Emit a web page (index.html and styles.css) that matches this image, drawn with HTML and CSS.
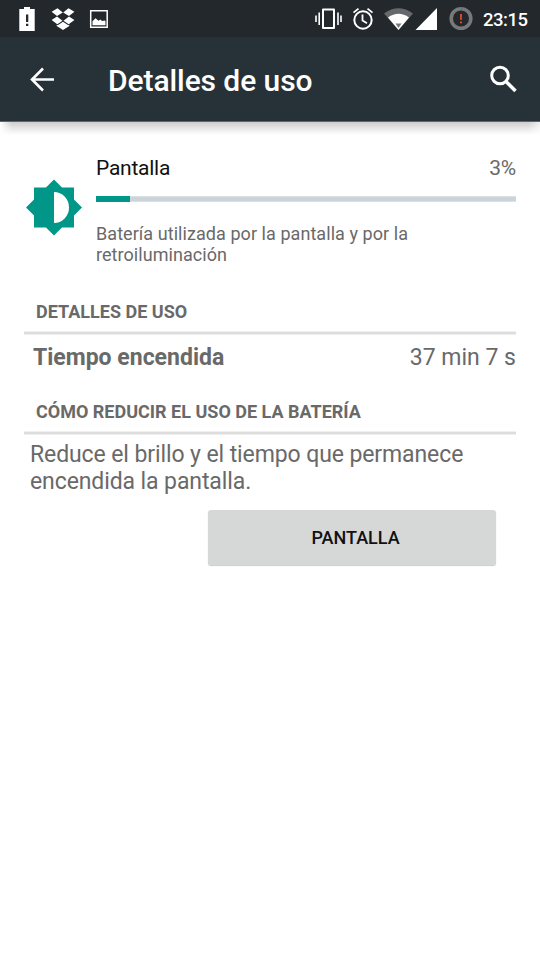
FILE: index.html
```
<!DOCTYPE html>
<html lang="es">
<head>
<meta charset="utf-8">
<title>Detalles de uso</title>
<link rel="stylesheet" href="styles.css">
</head>
<body>
<div class="status">
  <svg class="status-icons" width="120" height="37" viewBox="0 0 120 37">
    <path fill="#fff" d="M24 7h6v2h4.700v22H19.300V9H24z"/>
    <path fill="#22282c" d="M26 14.500h2.300v7.500H26zM26 23.700h2.300v2.300H26z"/>
    <path fill="#fff" d="M57.500 8.300l5.300 4.200-5.800 3.500-5.400-4.300zM68.500 8.300l-5.300 4.200 5.800 3.500 5.400-4.300zM57 16.500l5.500 4.200-5.200 3.500-5.700-4.200zM69 16.500l-5.500 4.200 5.200 3.500 5.700-4.200zM63 21.800l5.300 3.500 1-.6v1.300L63 30l-6.300-4v-1.300l1 .6z"/>
    <path fill="none" stroke="#fff" stroke-width="1.500" d="M90.700 10.700h16.500v16.500H90.700z"/>
    <path fill="#fff" d="M92.500 25.300v-4l3-3 3 2.500 2-1.300 1.500 1.500 3-.5.500 1v3.800z"/>
  </svg>
  <svg class="status-icons" width="170" height="37" viewBox="310 0 170 37">
    <path fill="none" stroke="#fff" stroke-width="2" stroke-linejoin="round" d="M323 9.500h11v18.500h-11z"/>
    <path stroke="#fff" stroke-width="1.600" d="M319.200 12.500v12.500M316 15.500v6.500M338 12.500v12.500M341 15.500v6.500"/>
    <circle cx="363" cy="20" r="8.700" fill="none" stroke="#fff" stroke-width="2"/>
    <path fill="none" stroke="#fff" stroke-width="1.800" d="M362.500 14.500V20.500l4.500 2.700M353.500 12.600l5-4M372.500 12.600l-5-4"/>
    <path fill="#66696c" d="M384 13.500Q398.500 3 413 13.500L398.500 30z"/>
    <path fill="#fff" d="M388 17.500Q398.500 10 409 17.500L398.500 30z"/>
    <path fill="#77797b" d="M395.500 23.500h6L398.500 28z"/>
    <path fill="#fff" d="M437 8v22h-21.500z"/>
    <circle cx="461" cy="18.500" r="9.800" fill="none" stroke="#77797a" stroke-width="3.600"/>
    <path stroke="#b0533d" stroke-width="1" d="M461.500 7v3.500"/>
    <path fill="#e8491f" d="M460 14h2l-.2 6h-1.600zM460 21.500h2v1.700h-2z"/>
  </svg>
  <span class="clock">23:15</span>
</div>
<header class="appbar">
  <svg width="28" height="28" viewBox="28 65 28 28"><path fill="none" stroke="#fff" stroke-width="2.600" d="M54 79.500H32M43 68.500l-11 11 11 11"/></svg>
  <h1>Detalles de uso</h1>
  <svg width="30" height="30" viewBox="489 64 30 30"><circle cx="500" cy="75.500" r="8.300" fill="none" stroke="#fff" stroke-width="3"/><path stroke="#fff" stroke-width="3.600" d="M506.500 82l9 9"/></svg>
</header>
<div class="shade"></div>
<main>
  <section class="summary">
    <svg class="brightness" width="58" height="58" viewBox="25 178 58 58">
      <path fill="#009688" d="M54 179.500l8 8h12v12l8 8-8 8v12H62l-8 8-8-8H34v-12l-8-8 8-8v-12h12z"/>
      <path fill="#fff" d="M54 192a15 15.500 0 0 1 0 31z"/>
    </svg>
    <div class="info">
      <div class="row name"><span>Pantalla</span><span class="percent">3%</span></div>
      <div class="bar"><div class="fill"></div></div>
      <p class="desc">Batería utilizada por la pantalla y por la<br>retroiluminación</p>
    </div>
  </section>
  <h2>DETALLES DE USO</h2>
  <div class="row detail"><b>Tiempo encendida</b><span>37 min 7 s</span></div>
  <h2>CÓMO REDUCIR EL USO DE LA BATERÍA</h2>
  <p class="tip">Reduce el brillo y el tiempo que permanece<br>encendida la pantalla.</p>
  <button>PANTALLA</button>
</main>
</body>
</html>
```

FILE: styles.css
```
* { box-sizing: border-box; margin: 0; }
body { width: 540px; height: 960px; background: #fff; font-family: Roboto, "Liberation Sans", sans-serif; color: #696969; overflow: hidden; }
svg { display: block; flex: none; }
.status { height: 37px; display: flex; background: #22282c; color: #fff; }
.status-icons + .status-icons { margin-left: 190px; }
.clock { margin-left: 3px; font-size: 18.5px; font-weight: 500; line-height: 40px; letter-spacing: -0.5px; }
.appbar { height: 85px; display: flex; align-items: center; padding: 0 21px 0 28px; background: #273238; border-bottom: 1px solid #60676b; color: #fff; }
h1 { flex: 1; margin-left: 52px; padding-top: 4px; font-size: 30px; font-weight: 500; line-height: 36px; letter-spacing: -0.08px; }
.shade { height: 13px; background: linear-gradient(90deg, #fff, transparent 12px, transparent 528px, #fffa), linear-gradient(#cecccc, #e8e8e8 50%, #fff); }
main { padding: 0 24px; }
.summary { display: flex; padding-top: 19px; height: 161px; }
.brightness { margin: 24px 13px 0 1px; }
.info { flex: 1; }
.row { display: flex; justify-content: space-between; }
.name { font-size: 21px; line-height: 28px; letter-spacing: -0.25px; color: #111; }
.percent { color: #696969; }
.bar { height: 6px; margin-top: 14px; background: #cbd4d8; border-block: 1px solid #dbe1e4; }
.fill { width: 34px; height: 6px; margin-top: -1px; background: #009688; }
.desc { margin-top: 21px; font-size: 18px; line-height: 21px; letter-spacing: 0.06px; }
h2 { height: 39px; padding-left: 12px; font-size: 18px; font-weight: 700; line-height: 32px; background: linear-gradient(#f0f0f0 1px, #dddddd 1px, #dddddd 3px, #eeeeee 3px) bottom / 100% 4px no-repeat; }
.detail { height: 61px; padding-left: 9px; font-size: 23px; line-height: 45px; }
.tip { padding: 6px 0 0 6px; font-size: 23px; line-height: 27px; letter-spacing: -0.1px; }
button { display: block; width: 288px; height: 55px; margin: 15px 0 0 183.5px; padding: 0 0 0 8px; border: 0; border-radius: 3px; background: #d6d8d7; box-shadow: 0 1px 1px #ccc; font: 500 18px/55px Roboto, sans-serif; color: #111; }
```
